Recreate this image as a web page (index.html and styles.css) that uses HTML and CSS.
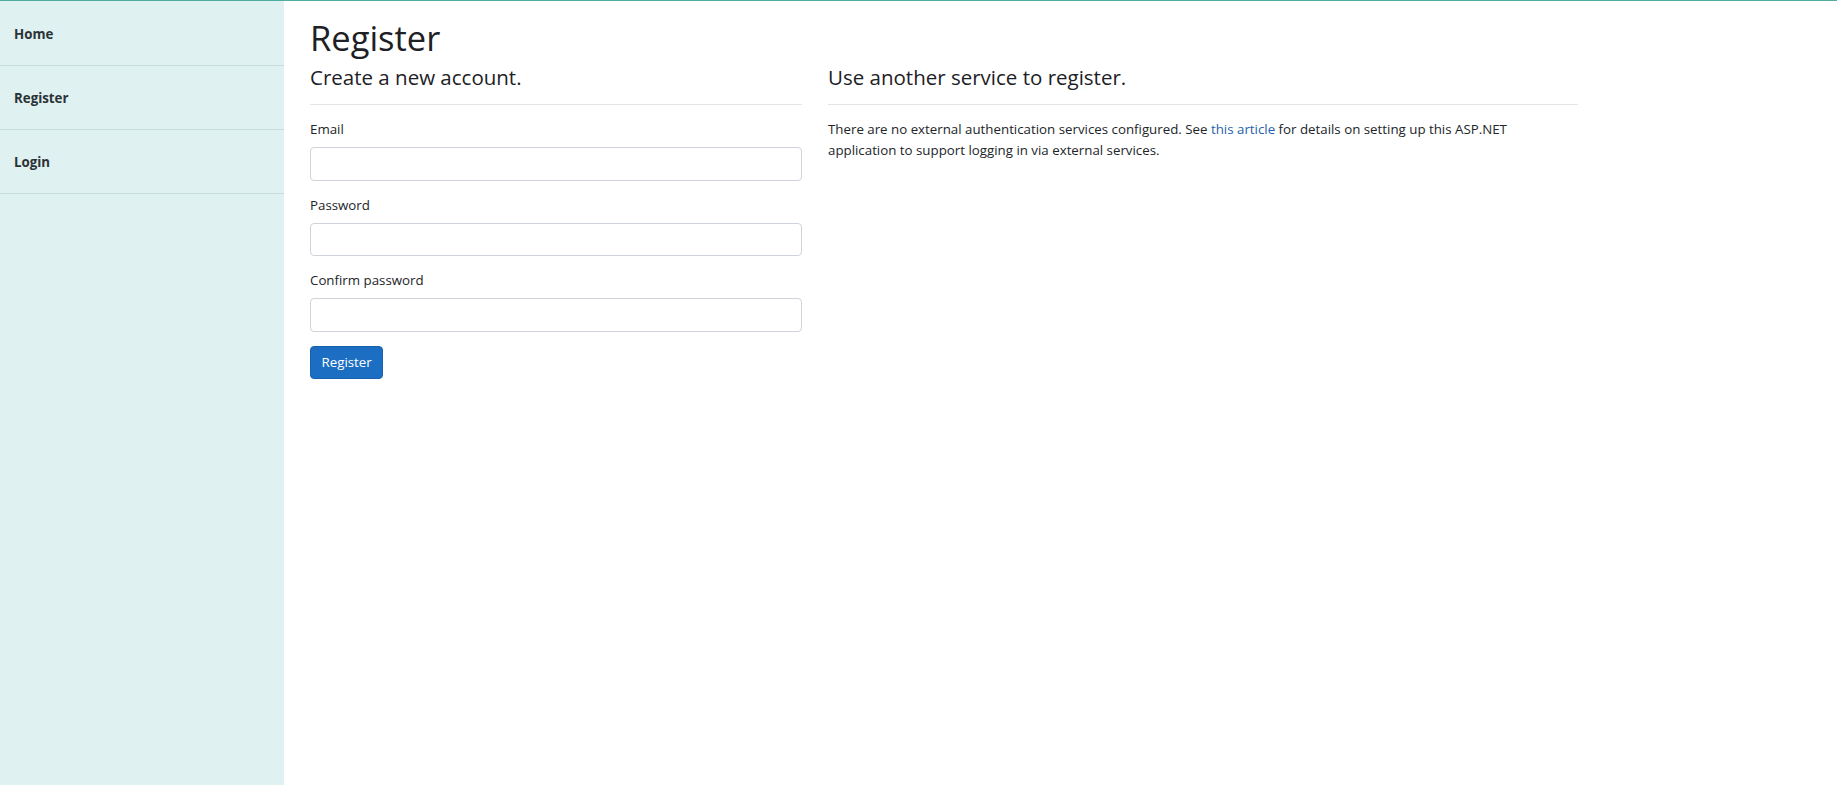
FILE: index.html
```html
<!DOCTYPE html>
<html lang="en">
<head>
<meta charset="utf-8">
<title>Register</title>
<link rel="stylesheet" href="styles.css">
</head>
<body>
<div class="page">
  <aside class="sidebar">
    <nav class="nav">
      <a class="nav-item" href="#">Home</a>
      <a class="nav-item" href="#">Register</a>
      <a class="nav-item" href="#">Login</a>
    </nav>
  </aside>
  <main class="main">
    <h1 class="title">Register</h1>
    <div class="row">
      <section class="col-left">
        <h4 class="section-title">Create a new account.</h4>
        <hr class="rule">
        <form class="form">
          <div class="form-group">
            <label class="label" for="email">Email</label>
            <input class="input" id="email" type="email">
          </div>
          <div class="form-group">
            <label class="label" for="pw">Password</label>
            <input class="input" id="pw" type="password">
          </div>
          <div class="form-group">
            <label class="label" for="cpw">Confirm password</label>
            <input class="input" id="cpw" type="password">
          </div>
          <button class="btn" type="button">Register</button>
        </form>
      </section>
      <section class="col-right">
        <h4 class="section-title">Use another service to register.</h4>
        <hr class="rule">
        <p class="text">There are no external authentication services configured. See <a class="link" href="#">this article</a> for details on setting up this ASP.NET application to support logging in via external services.</p>
      </section>
    </div>
  </main>
</div>
</body>
</html>
```
FILE: styles.css
```css
* { box-sizing: border-box; }

html, body {
  margin: 0;
  padding: 0;
  height: 100%;
}

body {
  font-family: "Open Sans", "Noto Sans", sans-serif;
  font-size: 13.3px;
  line-height: 21px;
  color: #212529;
  background: #ffffff;
}

.page {
  display: flex;
  min-height: 100%;
  height: 785px;
  border-top: 1px solid #4fae9f;
}

.sidebar {
  width: 284px;
  flex: 0 0 284px;
  background: #dff1f0;
  padding-top: 1px;
}

.nav {
  display: flex;
  flex-direction: column;
}

.nav-item {
  display: flex;
  align-items: center;
  height: 64px;
  padding: 2px 0 0 14px;
  border-bottom: 1px solid #c7dddc;
  font-weight: 700;
  font-size: 13.3px;
  color: #2b3336;
  text-decoration: none;
}

.main {
  flex: 1;
  padding: 16px 0 0 26px;
}

.title {
  margin: 0 0 6px 0;
  font-size: 34.5px;
  line-height: 42px;
  font-weight: 500;
  color: #1d2125;
}

.row {
  display: flex;
  gap: 26px;
}

.col-left {
  width: 492px;
  flex: 0 0 492px;
}

.col-right {
  width: 750px;
  flex: 0 0 750px;
}

.section-title {
  margin: 0;
  font-size: 20.5px;
  line-height: 25px;
  font-weight: 500;
  color: #1d2125;
}

.rule {
  margin: 14px 0 14px 0;
  border: 0;
  border-top: 1px solid #e3e4e5;
  height: 0;
}

.form-group {
  margin-bottom: 14px;
}

.label {
  display: block;
  margin-bottom: 7px;
  font-size: 13.3px;
  line-height: 21px;
  color: #212529;
}

.input {
  display: block;
  width: 100%;
  height: 33.5px;
  padding: 5px 10px;
  border: 1px solid #ced4da;
  border-radius: 4px;
  background: #ffffff;
  font-family: inherit;
  font-size: 13.3px;
}

.btn {
  display: inline-block;
  height: 33.5px;
  padding: 0 10.5px;
  border: 1px solid #1861ac;
  border-radius: 4px;
  background: #1b6ec2;
  color: #ffffff;
  font-family: inherit;
  font-size: 13.3px;
  line-height: 21px;
}

.text {
  margin: 0;
  max-width: 715px;
  font-size: 13.3px;
  line-height: 21px;
  color: #212529;
}

.link {
  color: #1f5fad;
  text-decoration: none;
}
```
